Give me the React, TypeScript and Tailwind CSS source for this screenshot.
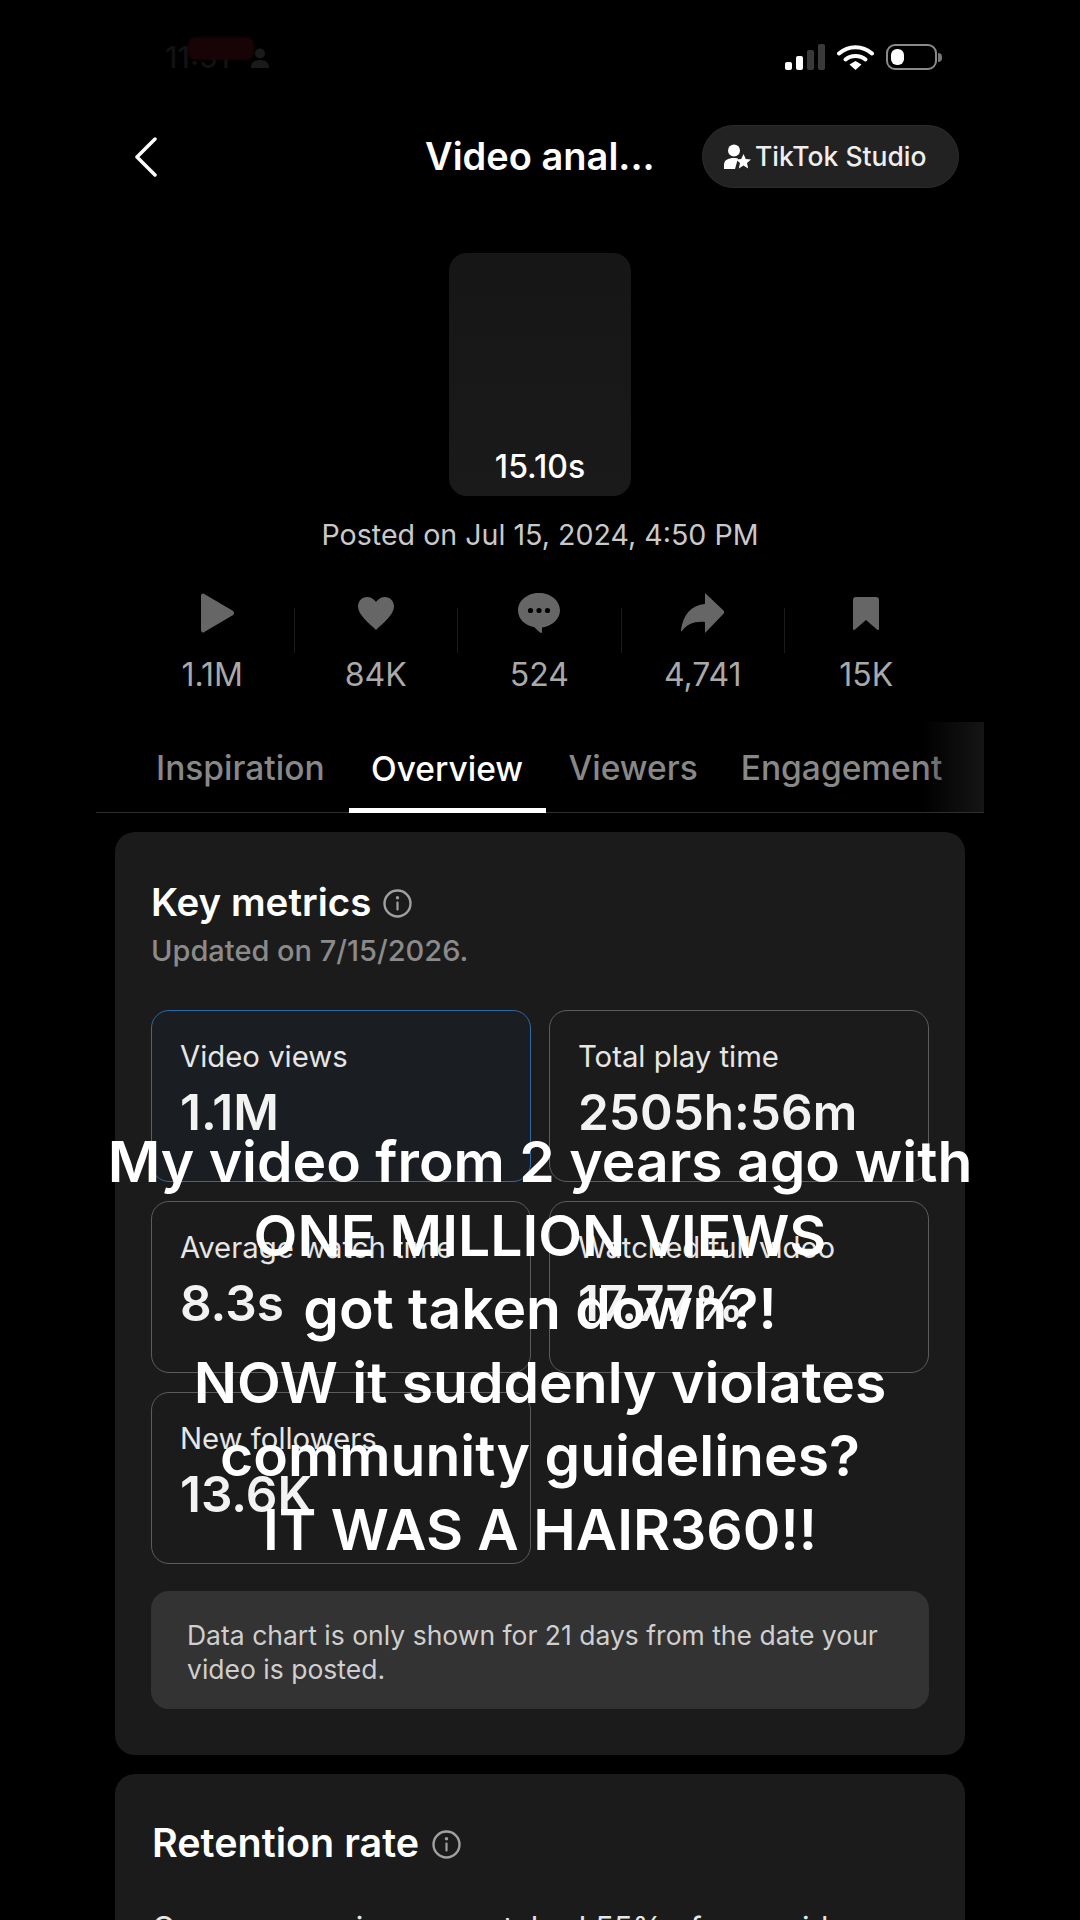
import React from 'react';

const sans = { fontFamily: 'Inter, "Noto Sans", sans-serif' };

function InfoIcon() {
    return (
        <svg width="29" height="29" viewBox="0 0 29 29" fill="none" className="shrink-0">
            <circle cx="14.5" cy="14.5" r="13" stroke="#a0a0a0" strokeWidth="2.400" />
            <circle cx="14.5" cy="8.8" r="1.7" fill="#a0a0a0" />
            <rect x="13.4" y="12.4" width="2.2" height="9" rx="1" fill="#a0a0a0" />
        </svg>
    );
}

function StatusBar() {
    return (
        <div className="relative h-[114px] flex items-center justify-between pl-[69px] pr-[42px]">
            <div className="flex items-center">
                <span className="text-[30px] font-medium text-[#121212] w-[70px]">11:51</span>
                <span className="absolute left-[92px] top-[37px] w-[66px] h-[23px] rounded-[8px] bg-[#180406] blur-[1px]" />
                <svg width="20" height="20" viewBox="0 0 20 20" className="relative ml-[15px] mt-[2px]">
                    <circle cx="10" cy="5.5" r="5" fill="#1a1a1a" />
                    <path d="M1 20c0-6 4-8 9-8s9 2 9 8z" fill="#1a1a1a" />
                </svg>
            </div>
            <div className="flex items-center gap-[12px]">
                <svg width="40" height="26" viewBox="0 0 40 26">
                    <rect x="0" y="18" width="7" height="8" rx="2" fill="#fff" />
                    <rect x="11" y="12" width="7" height="14" rx="2" fill="#fff" />
                    <rect x="22" y="6" width="7" height="20" rx="2" fill="#3a3a3a" />
                    <rect x="33" y="0" width="7" height="26" rx="2" fill="#3a3a3a" />
                </svg>
                <svg width="37" height="26" viewBox="0 0 37 26" fill="none">
                    <path d="M2 9.5C11.500 1 25.500 1 35 9.500" stroke="#fff" strokeWidth="4" strokeLinecap="round" />
                    <path d="M8.500 15.500C14 10.800 23 10.800 28.500 15.500" stroke="#fff" strokeWidth="4" strokeLinecap="round" />
                    <path d="M12.500 20.500L18.500 17L24.500 20.500L18.500 26z" fill="#fff" />
                </svg>
                <div className="flex items-center gap-[1px]">
                    <div className="w-[51px] h-[26px] rounded-[9px] border-[2px] border-[#8a8a8a] p-[3px]">
                        <div className="w-[13px] h-full rounded-[6px] bg-white" />
                    </div>
                    <div className="w-[4px] h-[9px] rounded-r-full bg-[#777]" />
                </div>
            </div>
        </div>
    );
}

function Header() {
    return (
        <div className="mt-[11px] h-[63px] flex items-center pl-[38px] pr-[25px]">
            <svg width="26" height="40" viewBox="0 0 26 40" fill="none" className="shrink-0">
                <path d="M21 2L3 20L21 38" stroke="#fff" strokeWidth="3.500" strokeLinecap="round" strokeLinejoin="round" />
            </svg>
            <div className="ml-[265px] text-[38px] font-semibold text-white whitespace-nowrap">Video anal...</div>
            <div className="ml-auto w-[257px] h-[63px] rounded-full bg-[#222222] border border-[#2c2c2c] flex items-center pl-[21px] gap-[4px]">
                <svg width="27" height="26" viewBox="0 0 27 26" className="shrink-0">
                    <circle cx="10" cy="6.500" r="6" fill="#fff" />
                    <path d="M0 25v-4c0-5 4-7 10-7 2 0 3 .2 4 .6L11 25z" fill="#fff" />
                    <path d="M19.500 10l2.300 5 5.200.5-4 3.500 1.200 5.500-4.700-3-4.700 3 1.200-5.500-4-3.500 5.200-.5z" fill="#fff" />
                </svg>
                <span className="text-[26.500px] font-medium text-[#eeeeee] whitespace-nowrap">TikTok Studio</span>
            </div>
        </div>
    );
}

function Stat({ icon, label }: { icon: React.ReactNode, label: string }) {
    return (
        <div className="w-[162.5px] flex flex-col items-center">
            <div className="h-[42px] flex items-center justify-center">{icon}</div>
            <div className="mt-[22px] h-[38px] leading-[38px] text-[32px] text-[#a9a9a9] whitespace-nowrap">{label}</div>
        </div>
    );
}

function Divider() {
    return <div className="w-px h-[45px] mt-[16px] bg-[#1a1a1a] shrink-0" />;
}

function Stats() {
    return (
        <div className="mt-[39px] ml-[35px] flex items-start">
            <Stat label="1.1M" icon={
                <svg width="36" height="40" viewBox="0 0 36 40" className="ml-[10px]"><path d="M2 3c0-2.500 2-3.300 3.700-1.700l28 16.500c1.800 1.200 1.800 3.200 0 4.400L5.700 38.700C4 40.300 2 39.500 2 37z" fill="#666" /></svg>
            } />
            <Divider />
            <Stat label="84K" icon={
                <svg width="36" height="33" viewBox="0 0 36 33"><path d="M18 33C12 27 0 18 0 9.500 0 4 4 0 9 0c4 0 7 2 9 5 2-3 5-5 9-5 5 0 9 4 9 9.500C36 18 24 27 18 33z" fill="#666" /></svg>
            } />
            <Divider />
            <Stat label="524" icon={
                <svg width="42" height="40" viewBox="0 0 42 40">
                    <path d="M21 0c11.600 0 21 7.600 21 17.500C42 26 34 33 24 34.500V39c0 1-1 1.200-2 .5l-6-5.500C7 32.500 0 26 0 17.500 0 7.600 9.400 0 21 0z" fill="#666" />
                    <circle cx="12.500" cy="17.500" r="2.600" fill="#000" />
                    <circle cx="21" cy="17.500" r="2.600" fill="#000" />
                    <circle cx="29.500" cy="17.500" r="2.600" fill="#000" />
                </svg>
            } />
            <Divider />
            <Stat label="4,741" icon={
                <svg width="43" height="40" viewBox="0 0 43 40"><path d="M24 0l19 18c.6.800.6 1.500 0 2.300L24 40V29C14 28 6 31 1 38c-1 .8-1.200 0-1-1C2 22 10 12 24 11z" fill="#666" /></svg>
            } />
            <Divider />
            <Stat label="15K" icon={
                <svg width="26" height="33" viewBox="0 0 26 33"><path d="M3 0h20c2 0 3 1.200 3 3v29c0 1-1 1.300-2 .6L13 23 2 32.600c-1 .7-2 .4-2-.6V3c0-1.800 1-3 3-3z" fill="#666" /></svg>
            } />
        </div>
    );
}

function Tabs() {
    return (
        <div className="relative mt-[28px] h-[91px] border-b border-[#2e2e2e] flex items-end pl-[60px] text-[33.500px] font-medium text-[#888888] leading-[40px]">
            <div className="pb-[24px] whitespace-nowrap">Inspiration</div>
            <div className="ml-[24px] w-[197px] pb-[19px] text-center text-white border-b-[5px] border-white -mb-px whitespace-nowrap">Overview</div>
            <div className="ml-[23px] pb-[24px] whitespace-nowrap">Viewers</div>
            <div className="ml-[43px] pb-[24px] whitespace-nowrap">Engagement</div>
            <div className="absolute right-0 top-0 bottom-0 w-[62px] bg-gradient-to-r from-transparent to-[#151515]" />
        </div>
    );
}

function Tile({ label, value, active }: { label: string, value: string, active?: boolean }) {
    return (
        <div className={`h-[172px] rounded-[18px] border pl-[28px] pt-[28px] ${active ? 'border-[#2e6aa6] bg-[#1a1d21]' : 'border-[#5c5c5c]'}`}>
            <div className="text-[29.300px] leading-[36px] text-[#e6e6e6] whitespace-nowrap">{label}</div>
            <div className="mt-[9px] text-[49.500px] leading-[56px] font-semibold text-[#f2f2f2] whitespace-nowrap">{value}</div>
        </div>
    );
}

function KeyMetrics() {
    return (
        <div className="mt-[19px] mx-[19px] h-[923px] rounded-[20px] bg-[#1b1b1b] px-[36px] pt-[48px]">
            <div className="flex items-center gap-[12px] h-[46px]">
                <div className="text-[38.500px] font-semibold text-white whitespace-nowrap">Key metrics</div>
                <InfoIcon />
            </div>
            <div className="mt-[7px] text-[29px] leading-[36px] font-medium text-[#8b8b8b]">Updated on 7/15/2026.</div>
            <div className="mt-[41px] grid grid-cols-2 gap-x-[18px] gap-y-[19px]">
                <Tile label="Video views" value="1.1M" active />
                <Tile label="Total play time" value="2505h:56m" />
                <Tile label="Average watch time" value="8.3s" />
                <Tile label="Watched full video" value="17.77%" />
                <Tile label="New followers" value="13.6K" />
            </div>
            <div className="mt-[27px] h-[118px] rounded-[18px] bg-[#333333] pl-[36px] pr-[20px] pt-[27px] text-[26.500px] leading-[34px] text-[#cfcfcf]">
                Data chart is only shown for 21 days from the date your video is posted.
            </div>
        </div>
    );
}

function Retention() {
    return (
        <div className="mt-[19px] mx-[19px] h-[300px] rounded-[20px] bg-[#1b1b1b] px-[37px] pt-[47px]">
            <div className="flex items-center gap-[13px] h-[46px]">
                <div className="text-[39.500px] font-semibold text-white whitespace-nowrap">Retention rate</div>
                <InfoIcon />
            </div>
            <div className="mt-[41px] text-[31px] leading-[40px] text-[#e6e6e6] whitespace-nowrap">On average, viewers watched 55% of your video</div>
        </div>
    );
}

export default function App() {
    return (
        <div className="relative w-[1080px] h-[1920px] overflow-hidden bg-black" style={sans}>
            <div className="w-[888px] mx-auto">
                <StatusBar />
                <Header />
                <div className="mt-[65px] mx-auto w-[182px] h-[243px] rounded-[18px] bg-gradient-to-b from-[#161616] to-[#1a1a1a] flex items-end justify-center pb-[9px]">
                    <span className="text-[32px] leading-[40px] font-medium text-white">15.10s</span>
                </div>
                <div className="mt-[21px] h-[36px] leading-[36px] text-center text-[28.600px] text-[#c9c9c9]">Posted on Jul 15, 2024, 4:50 PM</div>
                <Stats />
                <Tabs />
                <KeyMetrics />
                <Retention />
            </div>
            {/* caption burned over the video */}
            <div className="absolute left-0 right-0 top-[1125px] text-center text-[57px] leading-[73.5px] font-semibold text-white">
                <div>My video from 2 years ago with</div>
                <div>ONE MILLION VIEWS</div>
                <div>got taken down?!</div>
                <div>NOW it suddenly violates</div>
                <div>community guidelines?</div>
                <div>IT WAS A HAIR360!!</div>
            </div>
        </div>
    );
}
